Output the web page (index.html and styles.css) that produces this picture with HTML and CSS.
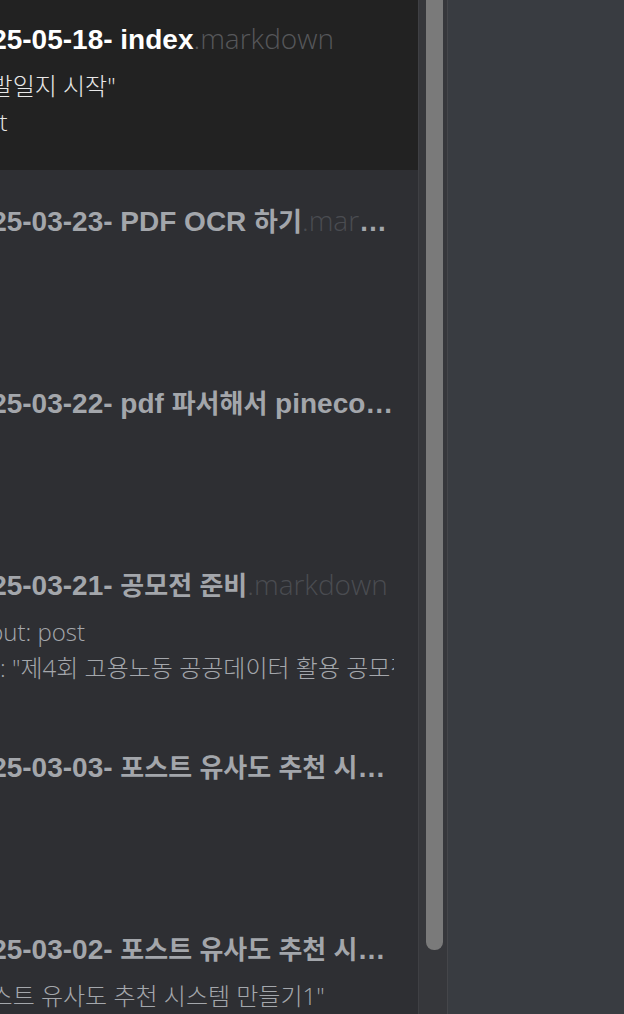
FILE: index.html
```html
<!DOCTYPE html>
<html lang="ko">
<head>
<meta charset="utf-8">
<title>Posts</title>
<link rel="stylesheet" href="styles.css">
</head>
<body>
<div class="app">
  <aside class="sidebar">
    <ul class="list">
      <li class="item selected">
        <div class="title">2025-05-18- index<span class="ext">.markdown</span></div>
        <div class="preview">
          <div class="line">"개발일지 시작"</div>
          <div class="line">post</div>
        </div>
      </li>
      <li class="item">
        <div class="title">2025-03-23- PDF OCR <span class="ko">하기</span><span class="ext">.markdown</span></div>
        <div class="preview"></div>
      </li>
      <li class="item">
        <div class="title">2025-03-22- pdf <span class="ko">파서해서</span> pinecone<span class="ko">에 저장하기</span><span class="ext">.markdown</span></div>
        <div class="preview"></div>
      </li>
      <li class="item">
        <div class="title">2025-03-21- <span class="ko">공모전 준비</span><span class="ext">.markdown</span></div>
        <div class="preview">
          <div class="line">layout: post</div>
          <div class="line">title: "제4회 고용노동 공공데이터 활용 공모전 준비"</div>
        </div>
      </li>
      <li class="item">
        <div class="title">2025-03-03- <span class="ko">포스트 유사도 추천 시스템 만들기</span>2<span class="ext">.markdown</span></div>
        <div class="preview"></div>
      </li>
      <li class="item">
        <div class="title">2025-03-02- <span class="ko">포스트 유사도 추천 시스템 만들기</span>1<span class="ext">.markdown</span></div>
        <div class="preview">
          <div class="line">"포스트 유사도 추천 시스템 만들기1"</div>
        </div>
      </li>
    </ul>
  </aside>
  <div class="scrolltrack"><div class="thumb"></div></div>
  <main class="editor"></main>
</div>
</body>
</html>
```

FILE: styles.css
```css
html, body {
  margin: 0;
  padding: 0;
  height: 1014px;
  overflow: hidden;
  background: #393c41;
}

.app {
  display: flex;
  height: 1014px;
}

.sidebar {
  width: 418px;
  flex: 0 0 418px;
  overflow: hidden;
  background: #2e2f33;
}

.list {
  list-style: none;
  margin: -12px 0 0 -40px;
  padding: 0;
  width: 458px;
}

.item {
  box-sizing: border-box;
  height: 182px;
  padding: 32px 20px 0 0;
}

.item.selected {
  background: #222222;
}

.title {
  font-family: "Liberation Sans", Arial, "Noto Sans CJK KR", sans-serif;
  font-weight: bold;
  font-size: 28px;
  line-height: 36px;
  color: #a3a6ab;
  white-space: nowrap;
  overflow: hidden;
  text-overflow: ellipsis;
}

.title .ko {
  font-family: "Noto Sans CJK KR", sans-serif;
  font-size: 26px;
}

.ext {
  font-family: "Open Sans", sans-serif;
  font-weight: 300;
  color: #4a4c51;
}

.selected .title {
  color: #ffffff;
}

.selected .ext {
  color: #56575a;
}

.preview {
  margin-top: 10px;
  font-family: "Open Sans", "Noto Sans CJK KR", sans-serif;
  font-weight: 300;
  font-size: 24px;
  line-height: 36px;
  color: #a4a7ac;
}

.selected .preview {
  color: #e8e8e8;
}

.line {
  margin-right: 4px;
  white-space: nowrap;
  overflow: hidden;
}

.scrolltrack {
  box-sizing: border-box;
  width: 30px;
  flex: 0 0 30px;
  background: #36373b;
  border-left: 1px solid #3f4044;
  border-right: 1px solid #45464a;
  padding: 0 4px 0 7px;
}

.thumb {
  height: 950px;
  background: #7a7a7a;
  border-radius: 0 0 8px 8px;
}

.editor {
  flex: 1;
  background: #393c41;
}
```
